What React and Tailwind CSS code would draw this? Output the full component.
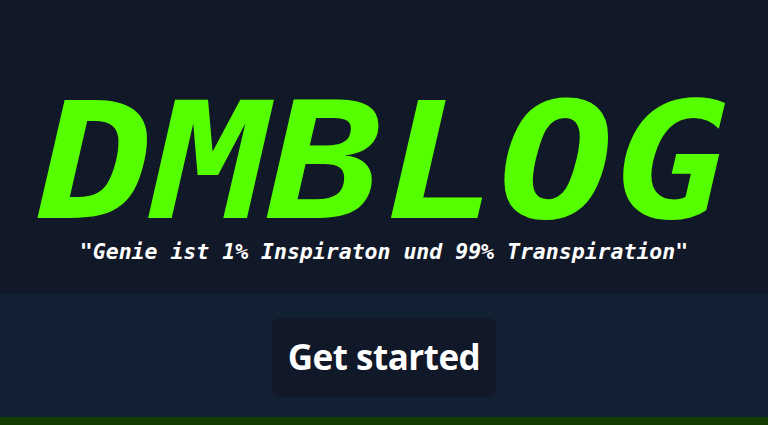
import React from 'react'

const App = () => {
    return (
        <div className="w-full min-h-screen bg-[#111827]">
            {/* Hero */}
            <div className="h-[294px] flex flex-col items-center bg-[#111827]">
                <h1
                    className="mt-[83px] h-[158px] flex items-center text-[162px] leading-none font-bold italic text-[#55ff00] scale-x-[1.18]"
                    style={{ fontFamily: '"DejaVu Sans Mono", monospace' }}
                >
                    DMBLOG
                </h1>
                <p
                    className="text-[21.5px] font-bold italic text-white leading-none"
                    style={{ fontFamily: '"DejaVu Sans Mono", monospace' }}
                >
                    "Genie ist 1% Inspiraton und 99% Transpiration"
                </p>
            </div>

            {/* Call to action */}
            <div className="h-[123px] flex items-start justify-center bg-[#112033]">
                <button
                    className="mt-[24px] w-[224px] h-[79px] rounded-lg bg-[#111827] text-white text-[35px] font-bold tracking-[-0.5px]"
                    style={{ fontFamily: '"Open Sans", sans-serif' }}
                >
                    Get started
                </button>
            </div>

            <div className="h-[8px] bg-[#143c00]" />
        </div>
    )
}

export default App
